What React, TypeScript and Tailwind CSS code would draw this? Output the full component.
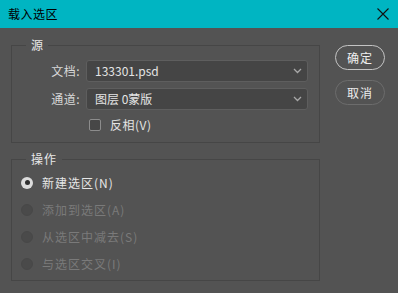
import React from "react";

const font = { fontFamily: '"Noto Sans CJK SC", "Noto Sans", sans-serif' };

function Chevron() {
  return (
    <svg width="9" height="6" viewBox="0 0 9 6" className="mr-[5px]">
      <path d="M1 1 L4.5 4.5 L8 1" stroke="#a8a8a8" strokeWidth="1.3" fill="none" />
    </svg>
  );
}

function Select({ value }: { value: string }) {
  return (
    <div className="h-[22px] w-[222px] rounded-[3px] border border-[#5e5e5e] bg-[#454545] flex items-center justify-between pl-[8px]">
      <span className="text-[12px] leading-[12px] text-[#e4e4e4]">{value}</span>
      <Chevron />
    </div>
  );
}

function Radio({ label, checked, disabled }: { label: string; checked?: boolean; disabled?: boolean }) {
  return (
    <div className="h-[27px] flex items-center">
      {checked ? (
        <div className="w-[12px] h-[12px] rounded-full bg-[#dcdcdc] flex items-center justify-center">
          <div className="w-[5px] h-[5px] rounded-full bg-[#2e2e2e]" />
        </div>
      ) : (
        <div className="w-[12px] h-[12px] rounded-full bg-[#4a4a4a] border border-[#484848]" />
      )}
      <span
        className={
          "ml-[9px] text-[12px] leading-[12px] tracking-[1px] " +
          (disabled ? "text-[#7a7a7a]" : "text-[#e6e6e6]")
        }
      >
        {label}
      </span>
    </div>
  );
}

export default function App() {
  return (
    <div className="w-[398px] h-[293px] bg-[#535353] flex flex-col overflow-hidden" style={font}>
      <div className="h-[28px] bg-[#00b5c2] flex items-center justify-between pl-[8px] pr-[9px] shrink-0">
        <span className="text-[12px] leading-[12px] text-black tracking-[0.5px]">载入选区</span>
        <svg width="12" height="12" viewBox="0 0 12 12">
          <path d="M0.5 0.5 L11.5 11.5 M11.5 0.5 L0.5 11.5" stroke="#111" strokeWidth="1.1" />
        </svg>
      </div>
      <div className="flex pl-[11px]">
        <div className="w-[309px] flex flex-col mt-[11px]">
          <fieldset className="border border-[#464646] pl-[14px] pr-[10px] pb-[11px] m-0">
            <legend className="px-[5px] text-[12px] leading-[12px] text-[#e8e8e8]">源</legend>
            <div className="mt-[9px] -ml-[14px] flex flex-col">
              <div className="flex items-center">
                <span className="w-[68px] text-right text-[12px] leading-[12px] text-[#d8d8d8] tracking-[0.5px]">文档:</span>
                <div className="ml-[6px]">
                  <Select value="133301.psd" />
                </div>
              </div>
              <div className="flex items-center mt-[6px]">
                <span className="w-[68px] text-right text-[12px] leading-[12px] text-[#d8d8d8] tracking-[0.5px]">通道:</span>
                <div className="ml-[6px]">
                  <Select value="图层 0蒙版" />
                </div>
              </div>
              <div className="flex items-center mt-[9px] ml-[77px]">
                <div className="w-[12px] h-[12px] rounded-[2px] border border-[#8c8c8c] bg-[#474747]" />
                <span className="ml-[9px] text-[12px] leading-[12px] text-[#e4e4e4] tracking-[0.5px]">反相(V)</span>
              </div>
            </div>
          </fieldset>
          <fieldset className="mt-[10px] border border-[#464646] pl-[14px] pr-[10px] pb-[3px] m-0">
            <legend className="px-[5px] text-[12px] leading-[12px] text-[#e8e8e8] tracking-[1px]">操作</legend>
            <div className="-ml-[5px] mt-[4px] flex flex-col">
              <Radio label="新建选区(N)" checked />
              <Radio label="添加到选区(A)" disabled />
              <Radio label="从选区中减去(S)" disabled />
              <Radio label="与选区交叉(I)" disabled />
            </div>
          </fieldset>
        </div>
        <div className="ml-[15px] mt-[17px] flex flex-col gap-[10px]">
          <div className="w-[50px] h-[25px] rounded-full border-[1.5px] border-[#c4c4c4] flex items-center justify-center text-[12px] leading-[12px] text-[#f0f0f0] tracking-[1px]">
            确定
          </div>
          <div className="w-[50px] h-[25px] rounded-full border-[1.5px] border-[#6c6c6c] flex items-center justify-center text-[12px] leading-[12px] text-[#ececec] tracking-[1px]">
            取消
          </div>
        </div>
      </div>
    </div>
  );
}
